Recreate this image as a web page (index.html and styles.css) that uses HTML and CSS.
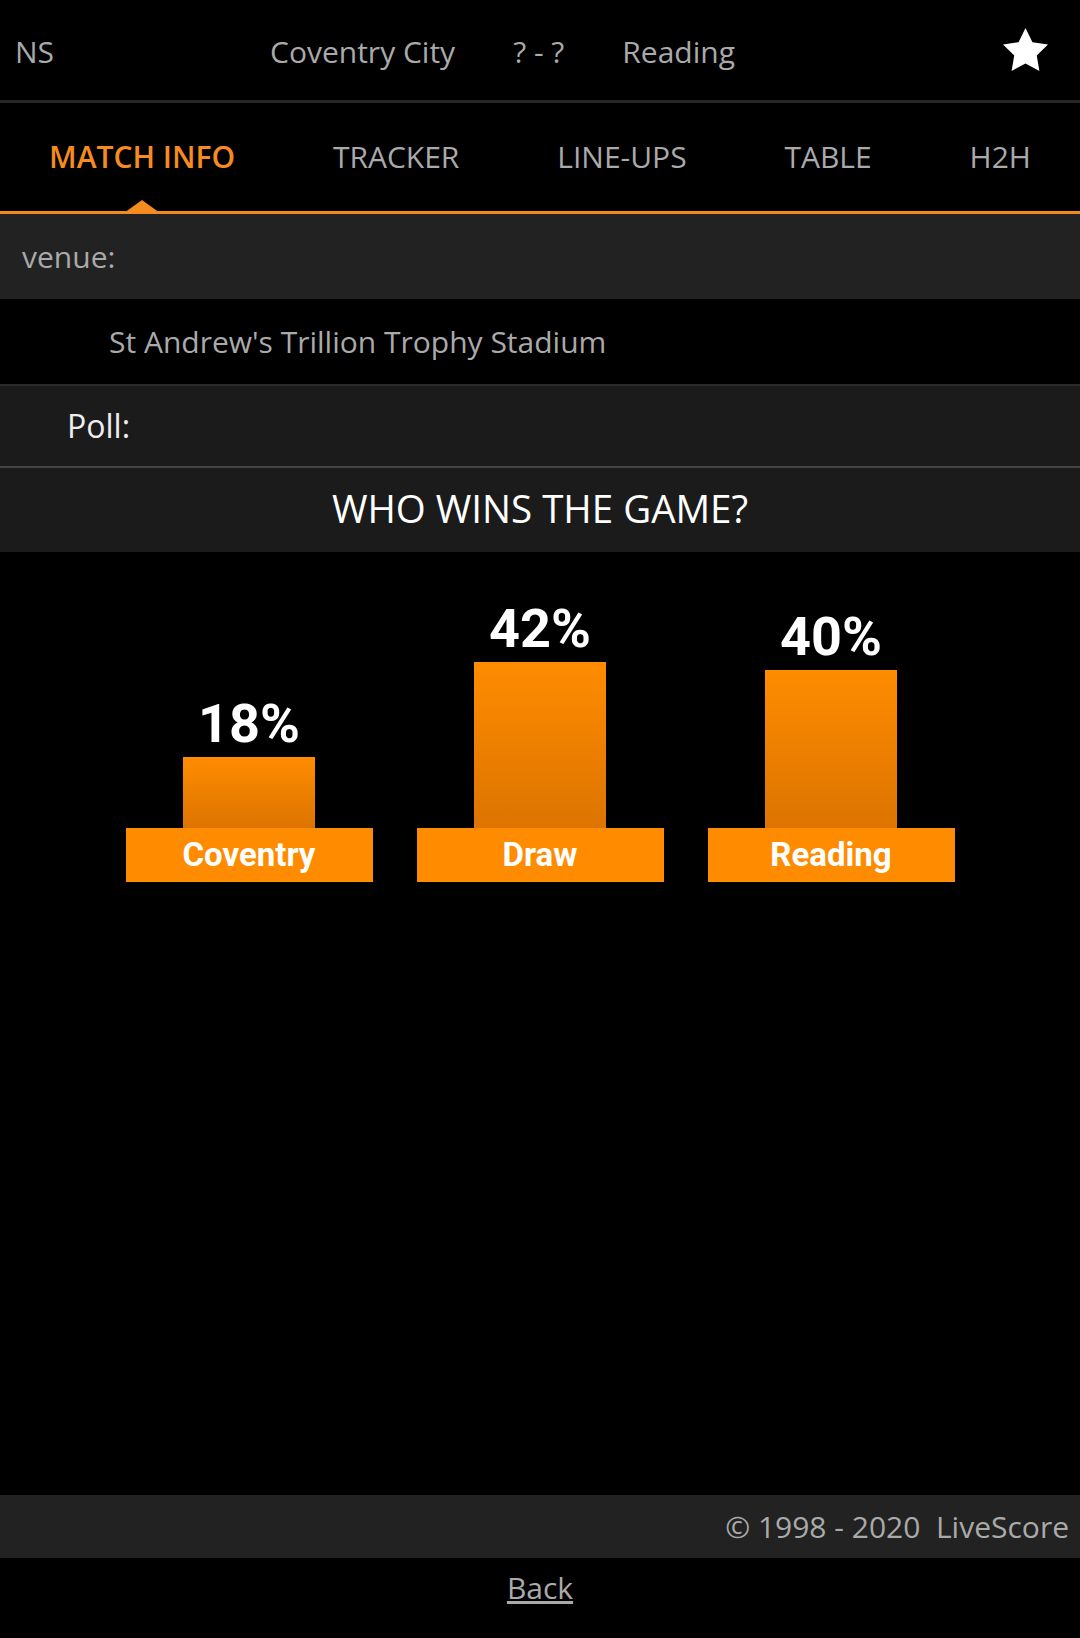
FILE: index.html
```html
<!DOCTYPE html>
<html lang="en">
<head>
    <meta charset="UTF-8">
    <meta name="viewport" content="width=device-width, initial-scale=1.0">
    <title>Coventry City v Reading</title>
    <link rel="stylesheet" href="styles.css">
</head>
<body>
    <div class="page">
        <div class="topbar">
            <span class="status">NS</span>
            <div class="fixture">
                <span>Coventry City</span>
                <span>? - ?</span>
                <span>Reading</span>
            </div>
            <svg class="fav" viewBox="2 2 20 19.02" width="45" height="43">
                <polygon points="12,2 15.09,8.26 22,9.27 17,14.14 18.18,21.02 12,17.77 5.82,21.02 7,14.14 2,9.27 8.91,8.26" fill="#fff"/>
            </svg>
        </div>

        <div class="tabs">
            <span class="tab active">MATCH INFO</span>
            <span class="tab">TRACKER</span>
            <span class="tab">LINE-UPS</span>
            <span class="tab">TABLE</span>
            <span class="tab">H2H</span>
        </div>

        <div class="row label-row">venue:</div>
        <div class="row venue">St Andrew's Trillion Trophy Stadium</div>
        <div class="row poll-row">Poll:</div>
        <div class="row question">WHO WINS THE GAME?</div>

        <div class="chart">
            <div class="col">
                <span class="pct">18%</span>
                <div class="bar" style="height: 71px"></div>
                <div class="pick">Coventry</div>
            </div>
            <div class="col">
                <span class="pct">42%</span>
                <div class="bar" style="height: 166px"></div>
                <div class="pick">Draw</div>
            </div>
            <div class="col">
                <span class="pct">40%</span>
                <div class="bar" style="height: 158px"></div>
                <div class="pick">Reading</div>
            </div>
        </div>

        <div class="footer">© 1998 - 2020&nbsp; LiveScore</div>
        <div class="back"><a href="#">Back</a></div>
    </div>
</body>
</html>
```

FILE: styles.css
```css
body {
    margin: 0;
    background: #000;
    color: #aaa;
    font-family: "Open Sans", "Noto Sans", sans-serif;
    font-size: 30px;
}
.page {
    min-height: 100vh;
    display: flex;
    flex-direction: column;
}
.topbar {
    height: 97px;
    display: flex;
    align-items: center;
    padding: 3px 32px 0 15px;
    border-bottom: 3px solid #262626;
    line-height: 30px;
}
.status {
    width: 255px;
}
.fixture {
    display: flex;
    gap: 58px;
}
.fav {
    margin-left: auto;
    margin-top: -4px;
}
.tabs {
    height: 108px;
    display: flex;
    align-items: center;
    justify-content: space-between;
    padding: 0 49px;
    border-bottom: 3px solid #f28a22;
    line-height: 30px;
}
.tab {
    position: relative;
    color: #aaa;
}
.tab.active {
    color: #f68b1f;
    font-weight: 600;
}
.tab.active::after {
    content: "";
    position: absolute;
    left: 50%;
    bottom: -41px;
    margin-left: -18px;
    border-left: 18px solid transparent;
    border-right: 18px solid transparent;
    border-bottom: 13px solid #f68b1f;
}
.row {
    display: flex;
    align-items: center;
    line-height: 30px;
}
.label-row {
    height: 85px;
    background: #222;
    padding-left: 22px;
}
.venue {
    height: 85px;
    padding-left: 109px;
    border-bottom: 2px solid #2a2a2a;
}
.poll-row {
    height: 80px;
    background: #1b1b1b;
    padding-left: 67px;
    color: #eee;
    font-size: 32px;
    border-bottom: 2px solid #444;
}
.question {
    height: 80px;
    padding-bottom: 4px;
    background: #1b1b1b;
    justify-content: center;
    color: #fff;
    font-size: 38.5px;
}
.chart {
    flex: 1;
    display: flex;
    justify-content: center;
    align-items: flex-start;
    gap: 44px;
    padding-top: 50px;
}
.col {
    display: flex;
    flex-direction: column;
    align-items: center;
    justify-content: flex-end;
    height: 280px;
}
.pct {
    font-family: Roboto, "Liberation Sans", sans-serif;
    font-weight: bold;
    font-size: 54px;
    line-height: 54px;
    color: #fff;
    margin-bottom: 6px;
}
.bar {
    width: 132px;
    background: linear-gradient(#ff8c00, #dc7400);
}
.pick {
    width: 247px;
    height: 54px;
    background: #ff8b00;
    color: #fff;
    text-align: center;
    font-family: Roboto, "Liberation Sans", sans-serif;
    font-weight: bold;
    font-size: 33px;
    line-height: 54px;
}
.footer {
    height: 63px;
    background: #222;
    display: flex;
    align-items: center;
    justify-content: flex-end;
    padding-right: 11px;
    line-height: 30px;
}
.back {
    height: 65px;
    padding-top: 15px;
    text-align: center;
    line-height: 30px;
}
.back a {
    color: #aaa;
}
```
